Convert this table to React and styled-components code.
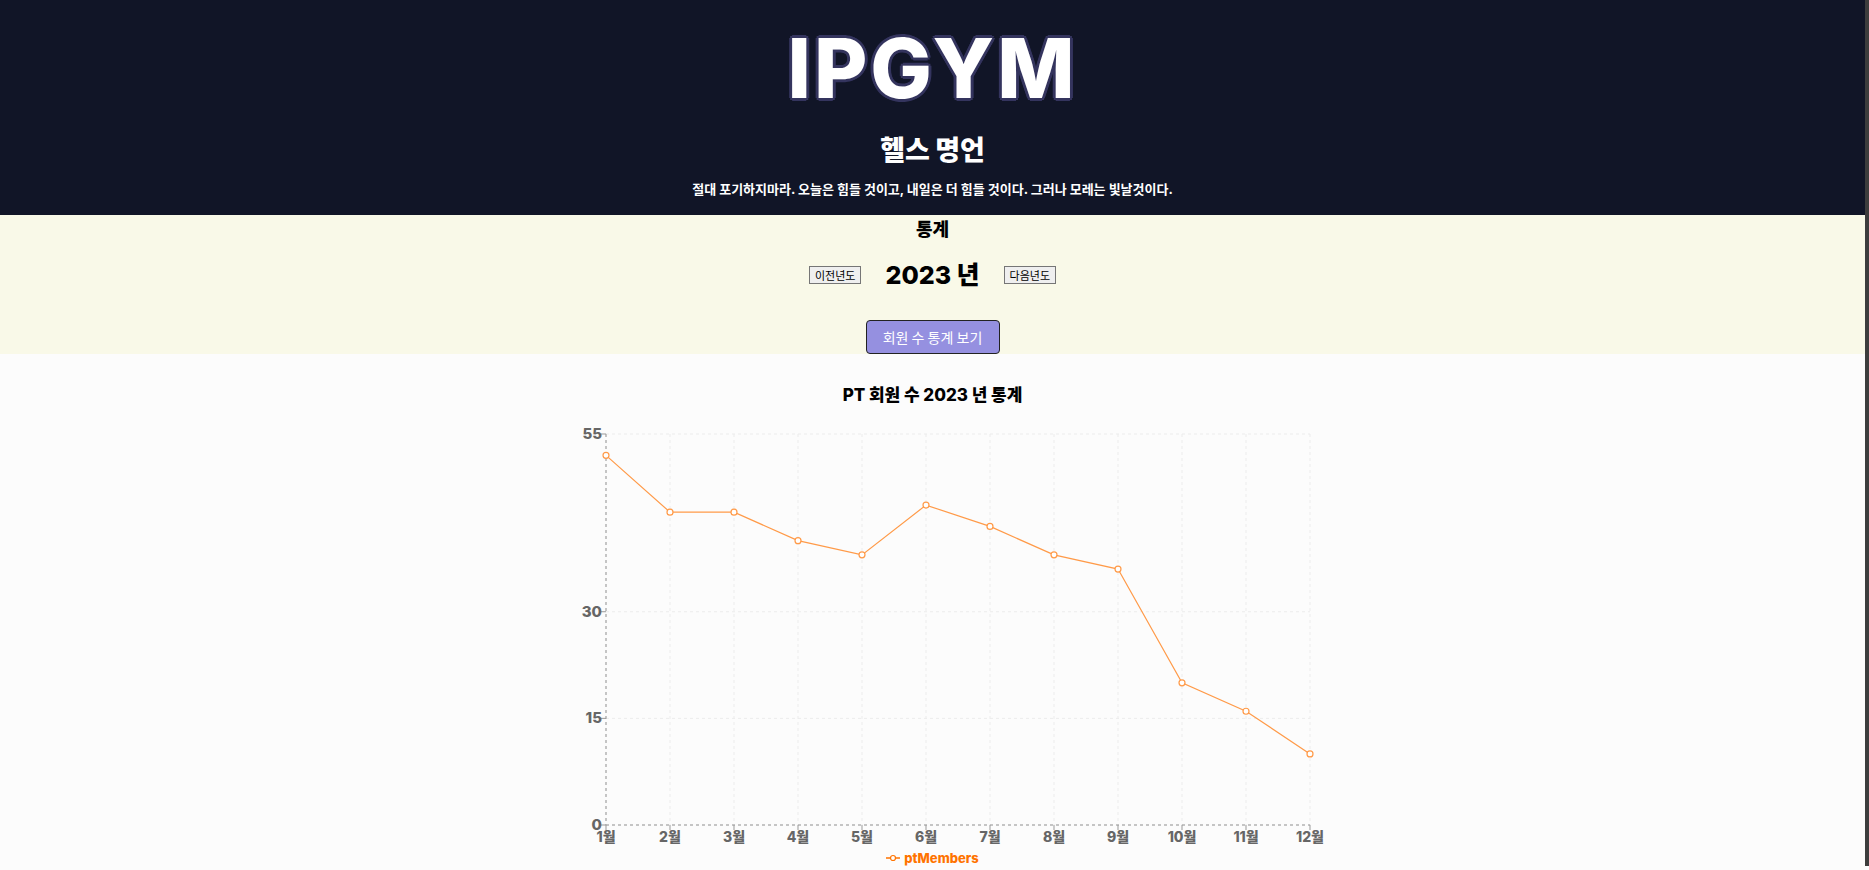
import React from 'react';
import styled, { createGlobalStyle } from 'styled-components';

const GlobalStyle = createGlobalStyle`
  body {
    margin: 0;
    background: #fcfcfc;
    border-right: 4px solid #3d3d3d;
    font-family: "Inter", "Noto Sans CJK KR", sans-serif;
  }
`;

// --- 헤더 ---
const Header = styled.header`
  background-color: #111527;
  height: 215px;
  display: flex;
  flex-direction: column;
  align-items: center;
  color: #fff;
  box-sizing: border-box;
  padding-top: 28px;
`;
const Logo = styled.h1`
  margin: 0;
  font-size: 82px;
  line-height: 82px;
  font-weight: 800;
  letter-spacing: 3px;
  color: #fff;
  text-shadow:
    3px 0 0 #34345e, -3px 0 0 #34345e, 0 3px 0 #34345e, 0 -3px 0 #34345e,
    2px 2px 0 #34345e, -2px 2px 0 #34345e, 2px -2px 0 #34345e, -2px -2px 0 #34345e;
`;
const QuoteTitle = styled.h2`
  margin: 26px 0 0;
  font-size: 27px;
  line-height: 30px;
  font-weight: 900;
`;
const QuoteText = styled.p`
  margin: 13px 0 0;
  font-size: 13px;
  font-weight: 700;
`;

// --- 통계 영역 ---
const StatsSection = styled.section`
  background-color: #f9f9e8;
  height: 139px;
  display: flex;
  flex-direction: column;
  align-items: center;
`;
const StatsTitle = styled.h3`
  margin: 3px 0 0;
  font-size: 18px;
  line-height: 24px;
  font-weight: 900;
`;
const YearRow = styled.div`
  display: flex;
  align-items: center;
  gap: 24px;
  margin-top: 18px;
`;
const YearButton = styled.button`
  font-family: "Noto Sans CJK KR", sans-serif;
  font-size: 11px;
  line-height: 14px;
  padding: 1px 5px;
  background: #efefef;
  border: 1px solid #767676;
  border-radius: 0;
  color: #000;
`;
const YearLabel = styled.h2`
  margin: 0;
  font-size: 25px;
  line-height: 30px;
  font-weight: 800;
`;
const ViewButton = styled.button`
  margin-top: 30px;
  width: 134px;
  height: 34px;
  background-color: #9590e0;
  color: #fff;
  border: 1px solid #222;
  border-radius: 4px;
  font-family: "Noto Sans CJK KR", sans-serif;
  font-size: 14px;
`;

// --- 차트 영역 ---
const ChartSection = styled.section`
  display: flex;
  flex-direction: column;
  align-items: center;
  padding-top: 30px;
`;
const ChartTitle = styled.h4`
  margin: 0;
  font-size: 17px;
  line-height: 22px;
  font-weight: 800;
`;
const ChartSvg = styled.svg`
  display: block;
  margin-top: 17px;
  font-family: "Inter", "Noto Sans CJK KR", sans-serif;
`;
const Legend = styled.div`
  display: flex;
  align-items: center;
  gap: 4px;
  color: #ff7300;
  font-size: 13px;
  font-weight: 800;
`;

const data = [52, 44, 44, 40, 38, 45, 42, 38, 36, 20, 16, 10];
const yTicks = [0, 15, 30, 55];

const W = 800;
const H = 427;
const LEFT = 73;
const RIGHT = 777;
const TOP = 11;
const BOTTOM = 402;
const xOf = (i) => LEFT + (i * (RIGHT - LEFT)) / 11;
const yOf = (v) => BOTTOM - (v * (BOTTOM - TOP)) / 55;

const LineChart = () => {
  const points = data.map((v, i) => `${xOf(i)},${yOf(v)}`).join(' ');
  return (
    <ChartSvg width={W} height={H} viewBox={`0 0 ${W} ${H}`}>
      {/* 그리드 */}
      {data.map((_, i) => (
        <line key={`v${i}`} x1={xOf(i)} x2={xOf(i)} y1={TOP} y2={BOTTOM} stroke="#ececec" strokeDasharray="3 3" />
      ))}
      {yTicks.map((t) => (
        <line key={`h${t}`} x1={LEFT} x2={RIGHT} y1={yOf(t)} y2={yOf(t)} stroke="#ececec" strokeDasharray="3 3" />
      ))}
      {/* 축 */}
      <line x1={LEFT} x2={LEFT} y1={TOP} y2={BOTTOM} stroke="#b5b5b5" strokeWidth="1.5" strokeDasharray="3 3" />
      <line x1={LEFT} x2={RIGHT} y1={BOTTOM} y2={BOTTOM} stroke="#b5b5b5" strokeWidth="1.5" strokeDasharray="3 3" />
      {yTicks.map((t) => (
        <g key={`yt${t}`}>
          <line x1={LEFT - 5} x2={LEFT} y1={yOf(t)} y2={yOf(t)} stroke="#999" />
          <text x={LEFT - 4} y={yOf(t) + 5} textAnchor="end" fontSize="15" fontWeight="800" fill="#666">{t}</text>
        </g>
      ))}
      {data.map((_, i) => (
        <g key={`xt${i}`}>
          <line x1={xOf(i)} x2={xOf(i)} y1={BOTTOM} y2={BOTTOM + 5} stroke="#999" />
          <text x={xOf(i)} y={BOTTOM + 17} textAnchor="middle" fontSize="14" fontWeight="800" fill="#666">{`${i + 1}월`}</text>
        </g>
      ))}
      {/* 데이터 라인 */}
      <polyline points={points} fill="none" stroke="#ff9a48" strokeWidth="1.2" />
      {data.map((v, i) => (
        <circle key={`d${i}`} cx={xOf(i)} cy={yOf(v)} r="3" fill="#fff" stroke="#ff9a48" strokeWidth="1.2" />
      ))}
    </ChartSvg>
  );
};

const App = () => {
  return (
    <>
      <GlobalStyle />
      <Header>
        <Logo>IPGYM</Logo>
        <QuoteTitle>헬스 명언</QuoteTitle>
        <QuoteText>절대 포기하지마라. 오늘은 힘들 것이고, 내일은 더 힘들 것이다. 그러나 모레는 빛날것이다.</QuoteText>
      </Header>
      <StatsSection>
        <StatsTitle>통계</StatsTitle>
        <YearRow>
          <YearButton>이전년도</YearButton>
          <YearLabel>2023 년</YearLabel>
          <YearButton>다음년도</YearButton>
        </YearRow>
        <ViewButton>회원 수 통계 보기</ViewButton>
      </StatsSection>
      <ChartSection>
        <ChartTitle>PT 회원 수 2023 년 통계</ChartTitle>
        <LineChart />
        <Legend>
          <svg width="14" height="10" viewBox="0 0 14 10">
            <line x1="0" x2="14" y1="5" y2="5" stroke="#ff7300" strokeWidth="1.5" />
            <circle cx="7" cy="5" r="2.5" fill="#fff" stroke="#ff7300" strokeWidth="1.2" />
          </svg>
          ptMembers
        </Legend>
      </ChartSection>
    </>
  );
};

export default App;
